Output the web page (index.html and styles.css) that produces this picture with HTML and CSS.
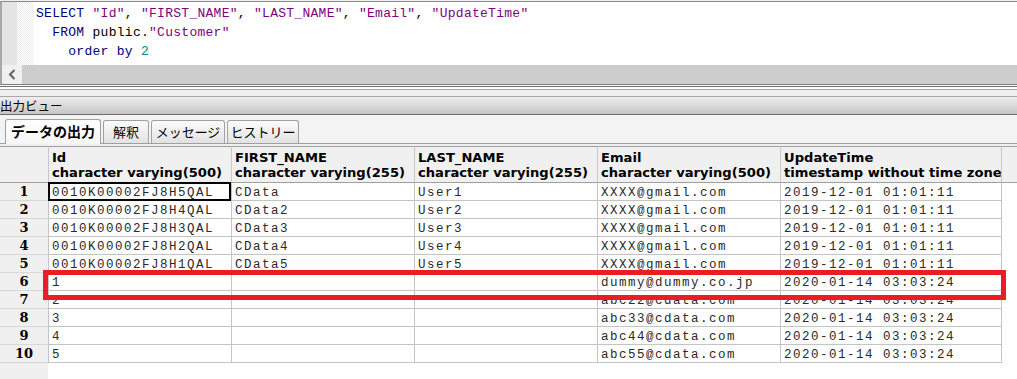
FILE: index.html
```html
<!DOCTYPE html>
<html lang="ja">
<head>
<meta charset="utf-8">
<title>出力ビュー</title>
<link rel="stylesheet" href="styles.css">
</head>
<body>
<div class="editor">
  <div class="code-wrap">
    <div class="gutter"></div>
    <div class="marks"></div>
    <pre class="code"><span class="kw">SELECT</span> <span class="str">"Id"</span>, <span class="str">"FIRST_NAME"</span>, <span class="str">"LAST_NAME"</span>, <span class="str">"Email"</span>, <span class="str">"UpdateTime"</span>
  <span class="kw">FROM</span> public.<span class="str">"Customer"</span>
    <span class="kw">order by</span> <span class="num">2</span></pre>
  </div>
  <div class="hscroll">
    <div class="arrow"><svg width="20" height="19" viewBox="0 0 20 19"><path d="M12.5 5 L8 9.5 L12.5 14" fill="none" stroke="#606060" stroke-width="2"/></svg></div>
    <div class="track"></div>
  </div>
</div>
<div class="sep"></div>
<div class="viewbar">出力ビュー</div>
<div class="tabs">
  <div class="tab active">データの出力</div>
  <div class="tab w46">解釈</div>
  <div class="tab w74">メッセージ</div>
  <div class="tab w72">ヒストリー</div>
</div>
<div class="grid-area">
  <div class="grid">
    <div class="hc corner"></div>
    <div class="hc">Id<br>character varying(500)</div>
    <div class="hc">FIRST_NAME<br>character varying(255)</div>
    <div class="hc">LAST_NAME<br>character varying(255)</div>
    <div class="hc">Email<br>character varying(500)</div>
    <div class="hc">UpdateTime<br>timestamp without time zone</div>
    <div class="hc fill"></div>

    <div class="rh">1</div><div class="c sel">0010K00002FJ8H5QAL</div><div class="c">CData</div><div class="c">User1</div><div class="c">XXXX@gmail.com</div><div class="c">2019-12-01 01:01:11</div><div class="rf"></div>
    <div class="rh">2</div><div class="c">0010K00002FJ8H4QAL</div><div class="c">CData2</div><div class="c">User2</div><div class="c">XXXX@gmail.com</div><div class="c">2019-12-01 01:01:11</div><div class="rf"></div>
    <div class="rh">3</div><div class="c">0010K00002FJ8H3QAL</div><div class="c">CData3</div><div class="c">User3</div><div class="c">XXXX@gmail.com</div><div class="c">2019-12-01 01:01:11</div><div class="rf"></div>
    <div class="rh">4</div><div class="c">0010K00002FJ8H2QAL</div><div class="c">CData4</div><div class="c">User4</div><div class="c">XXXX@gmail.com</div><div class="c">2019-12-01 01:01:11</div><div class="rf"></div>
    <div class="rh">5</div><div class="c">0010K00002FJ8H1QAL</div><div class="c">CData5</div><div class="c">User5</div><div class="c">XXXX@gmail.com</div><div class="c">2019-12-01 01:01:11</div><div class="rf"></div>
    <div class="rh">6</div><div class="c">1</div><div class="c"></div><div class="c"></div><div class="c">dummy@dummy.co.jp</div><div class="c">2020-01-14 03:03:24</div><div class="rf"></div>
    <div class="rh">7</div><div class="c">2</div><div class="c"></div><div class="c"></div><div class="c">abc22@cdata.com</div><div class="c">2020-01-14 03:03:24</div><div class="rf"></div>
    <div class="rh">8</div><div class="c">3</div><div class="c"></div><div class="c"></div><div class="c">abc33@cdata.com</div><div class="c">2020-01-14 03:03:24</div><div class="rf"></div>
    <div class="rh">9</div><div class="c">4</div><div class="c"></div><div class="c"></div><div class="c">abc44@cdata.com</div><div class="c">2020-01-14 03:03:24</div><div class="rf"></div>
    <div class="rh">10</div><div class="c">5</div><div class="c"></div><div class="c"></div><div class="c">abc55@cdata.com</div><div class="c">2020-01-14 03:03:24</div><div class="rf"></div>
  </div>
  <div class="highlight"></div>
</div>
</body>
</html>
```

FILE: styles.css
```css
* { box-sizing: border-box; }
html, body { margin: 0; padding: 0; }
body {
  width: 1017px;
  height: 379px;
  overflow: hidden;
  background: #f0f0f0;
  display: flex;
  flex-direction: column;
  font-family: "Noto Sans CJK JP", sans-serif;
}

/* editor */
.editor {
  margin-top: 1px;
  height: 84px;
  flex: none;
  border-top: 1px solid #8c8c8c;
  border-left: 2px solid #a8a8a8;
  border-bottom: 1px solid #7a7a7a;
  background: #fff;
  display: flex;
  flex-direction: column;
}
.code-wrap {
  height: 63px;
  display: flex;
}
.gutter { width: 15px; background: #e4e4e4; flex: none; }
.marks {
  width: 17px;
  flex: none;
  background: repeating-conic-gradient(#ececec 0 25%, #ffffff 0 50%) 0 0 / 2px 2px;
}
.code {
  margin: 0;
  padding: 2px 0 0 2px;
  font-family: "Liberation Mono", monospace;
  font-size: 13px;
  letter-spacing: 0.27px;
  line-height: 19px;
  color: #000;
}
.kw { color: #000080; }
.str { color: #800080; }
.num { color: #008b8b; }

.hscroll {
  height: 19px;
  display: flex;
  background: #cdcdcd;
}
.arrow { width: 20px; background: #f0f0f0; flex: none; display: flex; }
.track { flex: 1; }

.sep {
  height: 11px;
  flex: none;
  background: linear-gradient(to bottom, #ffffff 0 1px, #6e6e6e 1px 2px, #ffffff 2px 4px, #a8a8a8 4px 5px, #f0f0f0 5px);
}
.viewbar {
  height: 19px;
  flex: none;
  border-top: 1px solid #a8a8a8;
  border-bottom: 1px solid #6e6e6e;
  background: linear-gradient(to bottom, #efefef, #c6c6c6);
  font-size: 12.5px;
  line-height: 17px;
  color: #000;
  padding-left: 0;
}

/* tabs */
.tabs {
  height: 29px;
  flex: none;
  margin-bottom: 2px;
  padding-left: 5px;
  display: flex;
  align-items: flex-end;
  gap: 2px;
  border-bottom: 1px solid #a0a0a0;
  background: #f3f3f3;
}
.tab {
  height: 23px;
  border: 1px solid #a0a0a0;
  border-bottom: none;
  border-radius: 3px 3px 0 0;
  background: linear-gradient(to bottom, #fbfbfb, #e2e2e2);
  font-size: 13px;
  line-height: 21px;
  text-align: center;
  color: #000;
}
.tab.active {
  width: 96px;
  height: 25px;
  margin-bottom: -1px;
  background: linear-gradient(to bottom, #ffffff, #f6f6f6);
  font-weight: bold;
  font-size: 14px;
  line-height: 23px;
}
.w46 { width: 46px; }
.w74 { width: 74px; }
.w72 { width: 72px; }

/* grid */
.grid-area {
  position: relative;
  flex: 1;
  background: linear-gradient(to right, #f0f0f0 48px, #ffffff 48px);
}
.grid {
  display: grid;
  grid-template-columns: 48px 183px 183px 183px 183px 221px 1fr;
  grid-template-rows: 37px repeat(10, 18px);
}
.hc {
  background: #f0f0f0;
  border-top: 1px solid #a0a0a0;
  border-bottom: 1px solid #a0a0a0;
  border-left: 1px solid #c8c8c8;
  padding: 3px 0 0 3px;
  font-family: "DejaVu Sans", sans-serif;
  font-weight: bold;
  font-size: 13.1px;
  line-height: 15px;
  color: #000;
  white-space: nowrap;
  overflow: hidden;
}
.hc.corner { border-left: none; }
.rh {
  background: #f0f0f0;
  border-bottom: 1px solid #d8d8d8;
  text-align: center;
  font-family: "DejaVu Serif", serif;
  font-weight: bold;
  font-size: 13px;
  line-height: 15px;
  padding-top: 1px;
  color: #000;
  overflow: hidden;
}
.c {
  background: #fff;
  border-left: 1px solid #c4c4c4;
  border-bottom: 1px solid #c4c4c4;
  padding: 3px 0 0 3px;
  font-family: "Liberation Mono", monospace;
  font-size: 12.5px;
  letter-spacing: 1.5px;
  line-height: 15px;
  color: #2a2a2a;
  white-space: nowrap;
  overflow: hidden;
}
.rf {
  border-left: 1px solid #c4c4c4;
  background: #fff;
}
.sel { position: relative; overflow: visible; }
.sel::after {
  content: "";
  position: absolute;
  top: -1px;
  left: -1px;
  right: 0;
  bottom: -1px;
  border: 2px solid #000;
}
.highlight {
  position: absolute;
  left: 43px;
  top: 124px;
  width: 963px;
  height: 30px;
  border: 5px solid #ea1c24;
}
```
